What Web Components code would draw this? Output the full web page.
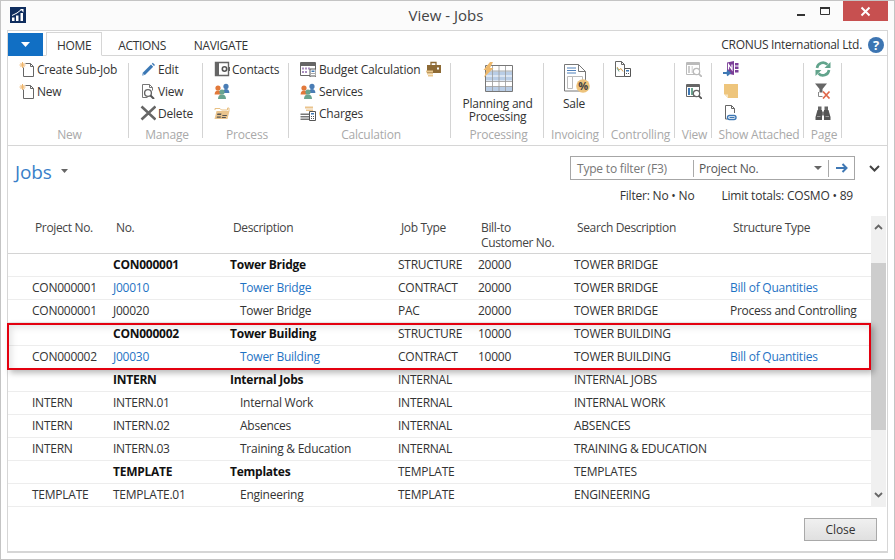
<!DOCTYPE html>
<html>
<head>
<meta charset="utf-8">
<title>View - Jobs</title>
<style>
  html, body { margin: 0; padding: 0; background: #fff; }
  body { font: 12px "Open Sans", "Liberation Sans", sans-serif; color: #333; }
</style>
</head>
<body>
<job-window>
  <title-bar slot="title" heading="View - Jobs"></title-bar>
  <ribbon-tabs slot="tabs" company="CRONUS International Ltd.">
    <ribbon-tab active>HOME</ribbon-tab>
    <ribbon-tab style="margin-left:16px">ACTIONS</ribbon-tab>
    <ribbon-tab style="margin-left:28px">NAVIGATE</ribbon-tab>
  </ribbon-tabs>

  <ribbon-bar slot="ribbon">
    <ribbon-group label="New" width="121">
      <ribbon-col>
        <ribbon-item icon="newdoc">Create Sub-Job</ribbon-item>
        <ribbon-item icon="newdoc">New</ribbon-item>
      </ribbon-col>
    </ribbon-group>
    <ribbon-group label="Manage" width="74">
      <ribbon-col>
        <ribbon-item icon="edit">Edit</ribbon-item>
        <ribbon-item icon="view">View</ribbon-item>
        <ribbon-item icon="delete">Delete</ribbon-item>
      </ribbon-col>
    </ribbon-group>
    <ribbon-group label="Process" width="86">
      <ribbon-col>
        <ribbon-item icon="contacts">Contacts</ribbon-item>
        <ribbon-item icon="people"></ribbon-item>
        <ribbon-item icon="folder"></ribbon-item>
      </ribbon-col>
    </ribbon-group>
    <ribbon-group label="Calculation" width="162">
      <ribbon-col style="width:126px;--item-gap:3px">
        <ribbon-item icon="budget">Budget Calculation</ribbon-item>
        <ribbon-item icon="people">Services</ribbon-item>
        <ribbon-item icon="charges">Charges</ribbon-item>
      </ribbon-col>
      <ribbon-col>
        <ribbon-item icon="briefcase"></ribbon-item>
      </ribbon-col>
    </ribbon-group>
    <ribbon-group label="Processing" width="93">
      <ribbon-large icon="planning">Planning and<br>Processing</ribbon-large>
    </ribbon-group>
    <ribbon-group label="Invoicing" width="60">
      <ribbon-large icon="sale">Sale</ribbon-large>
    </ribbon-group>
    <ribbon-group label="Controlling" width="71">
      <ribbon-col><ribbon-item icon="controlling"></ribbon-item></ribbon-col>
    </ribbon-group>
    <ribbon-group label="View" width="37">
      <ribbon-col>
        <ribbon-item icon="viewgrey"></ribbon-item>
        <ribbon-item icon="viewdark"></ribbon-item>
      </ribbon-col>
    </ribbon-group>
    <ribbon-group label="Show Attached" width="92">
      <ribbon-col>
        <ribbon-item icon="onenote"></ribbon-item>
        <ribbon-item icon="note"></ribbon-item>
        <ribbon-item icon="attach"></ribbon-item>
      </ribbon-col>
    </ribbon-group>
    <ribbon-group label="Page" width="38">
      <ribbon-col>
        <ribbon-item icon="refresh"></ribbon-item>
        <ribbon-item icon="filterx"></ribbon-item>
        <ribbon-item icon="binoculars"></ribbon-item>
      </ribbon-col>
    </ribbon-group>
  </ribbon-bar>

  <page-head slot="head" heading="Jobs"></page-head>

  <job-table slot="table">
    <job-row head data="Project No.|No.|Description|Job Type|Bill-to<br>Customer No.|Search Description|Structure Type"></job-row>
    <job-row bold data="|CON000001|Tower Bridge|STRUCTURE|20000|TOWER BRIDGE|"></job-row>
    <job-row link data="CON000001|J00010|Tower Bridge|CONTRACT|20000|TOWER BRIDGE|Bill of Quantities"></job-row>
    <job-row data="CON000001|J00020|Tower Bridge|PAC|20000|TOWER BRIDGE|Process and Controlling"></job-row>
    <job-row bold data="|CON000002|Tower Building|STRUCTURE|10000|TOWER BUILDING|"></job-row>
    <job-row link data="CON000002|J00030|Tower Building|CONTRACT|10000|TOWER BUILDING|Bill of Quantities"></job-row>
    <job-row bold data="|INTERN|Internal Jobs|INTERNAL||INTERNAL JOBS|"></job-row>
    <job-row data="INTERN|INTERN.01|Internal Work|INTERNAL||INTERNAL WORK|"></job-row>
    <job-row data="INTERN|INTERN.02|Absences|INTERNAL||ABSENCES|"></job-row>
    <job-row data="INTERN|INTERN.03|Training &amp; Education|INTERNAL||TRAINING &amp; EDUCATION|"></job-row>
    <job-row bold data="|TEMPLATE|Templates|TEMPLATE||TEMPLATES|"></job-row>
    <job-row data="TEMPLATE|TEMPLATE.01|Engineering|TEMPLATE||ENGINEERING|"></job-row>
  </job-table>

  <window-foot slot="foot"></window-foot>
</job-window>

<script>
// icon drawings, all on a 16 box unless the entry brings its own svg
const ICONS = {
  newdoc: `<path d="M6.5 2.5h5l3 3v10h-10v-9" fill="#fff" stroke="#666"/><path d="M11.5 2.5v3h3" fill="none" stroke="#666"/>
    <path d="M3.5 1v6M.5 4h6M1.4 1.9l4.2 4.2M5.6 1.9l-4.2 4.2" stroke="#eeb56c" stroke-width="1"/>`,
  edit: `<path d="M3 11.5l8-8 2.2 2.2-8 8-3 .8z" fill="#3b78b5"/><path d="M11.8 2.7l1-1 2.2 2.2-1 1z" fill="#3b78b5"/><path d="M2.2 14.500l.6-2.400 1.800 1.800z" fill="#9dbbd8"/>`,
  view: `<path d="M2.5 1.5h7l3 3v3M2.5 1.5v13h5" fill="none" stroke="#777"/><path d="M9.5 1.5v3h3" fill="none" stroke="#777"/>
    <circle cx="8" cy="10" r="3.4" fill="#fff" stroke="#666" stroke-width="1.4"/><path d="M10.5 12.5l3.5 3.5" stroke="#555" stroke-width="2"/>`,
  delete: `<path d="M1.5 1.500l14 13M15.500 1.500l-14 13" stroke="#666" stroke-width="2.600"/>`,
  contacts: `<path d="M1.5 1.5h13v13h-13z" fill="#fff" stroke="#666" stroke-width="1.4"/><path d="M1 1h4v14H1z" fill="#666"/><circle cx="10.5" cy="8" r="2.2" fill="none" stroke="#555" stroke-width="1.6"/><path d="M14 6h2v4h-2z" fill="#666"/>`,
  people: `<circle cx="12" cy="3.4" r="2.6" fill="#4a7db5"/><path d="M8.6 10c0-2.6 1.4-4 3.4-4s3.4 1.4 3.4 4z" fill="#4a7db5"/>
    <circle cx="4" cy="5" r="2.6" fill="#e2793a"/><path d="M.6 11.5c0-2.6 1.4-4 3.4-4s3.4 1.4 3.4 4z" fill="#e2793a"/>
    <circle cx="8" cy="9" r="2.6" fill="#6aa590"/><path d="M4 16c0-3 1.6-4.400 4-4.400s4 1.400 4 4.400z" fill="#6aa590"/>`,
  folder: `<path d="M1 5V3.500h5l1.500 1.500h6V3h1.500v3" fill="none" stroke="#e8c083"/><path d="M.5 14l2-8h13l-2 8z" fill="#eac48d"/><path d="M3.500 8.500h4l-.5 1.500h-4zM3 11.500h4l-.4 1.200h-4zM8.500 10h4.500l-.3 1h-4.500zM8 12h4l-.3 1H7.700z" fill="#555"/>`,
  budget: `<path d="M.5 1.500h15v13H.5z" fill="#fff" stroke="#666"/><path d="M1 2h14v3H1z" fill="#666"/><path d="M2 6.500h2v2H2zM5 6.500h2v2H5zM8 6.500h2v2H8zM2 10h2v2H2zM5 10h2v2H5z" fill="#a98ec0"/>
    <path d="M10 8h6v8h-6z" fill="#fff" stroke="#555"/><path d="M11.500 9.500h3v1.500h-3z" fill="#3f78b4"/><path d="M11.500 12h1v1h-1zM13.500 12h1v1h-1zM11.500 14h1v1h-1zM13.500 14h1v1h-1z" fill="#555"/>`,
  briefcase: `<path d="M5 4V1.500h5V4" fill="none" stroke="#8d6a35" stroke-width="1.300"/><path d="M1 4h14v8H1z" fill="#8d6a35"/><path d="M11 6.500h2v2h-2z" fill="#fff"/><path d="M0 9.500h7v2H0zM1 12h6v1.600H1zM2 14h5v1.600H2z" fill="#e9c88f"/>`,
  charges: `<path d="M5 1.500h8v2H5zM6 4.500h7v1.500H6z" fill="#eac48d"/><path d="M.500 8.500h9v1.500h-9zM.500 11h9v1.500h-9zM.500 13.500h9V15h-9z" fill="#777"/>
    <path d="M9.500 6.500h6v9h-6z" fill="#fff" stroke="#555"/><path d="M11 8h3v1.500h-3z" fill="#3f78b4"/><path d="M11 11h1v1h-1zM13 11h1v1h-1zM11 13h1v1h-1zM13 13h1v1h-1z" fill="#555"/>`,
  controlling: `<path d="M.5.500h6l3 3v12h-9z" fill="#fff" stroke="#666"/><path d="M6.500.500v3h3" fill="none" stroke="#666"/><path d="M2 6l2 3 2-1.500 2 3" fill="none" stroke="#d6a04e"/><path d="M2 7l2 3.500" stroke="#6aa590" fill="none"/>
    <path d="M9.500 7.500h6v8h-6z" fill="#fff" stroke="#555"/><path d="M11 9h3v1.500h-3z" fill="#3f78b4"/><path d="M11 12h1v1h-1zM13 12h1v1h-1z" fill="#555"/>`,
  viewgrey: `<path d="M.5 1.500h13v12H.5z" fill="#fff" stroke="#bbb"/><path d="M1 2h12v2H1z" fill="#bbb"/><path d="M2 5h2v7H2z" fill="#ccc"/><path d="M5.500 5H7v7H5.500z" fill="#ddd"/>
    <circle cx="10.500" cy="10.500" r="3.200" fill="#fff" stroke="#bbb" stroke-width="1.300"/><path d="M12.800 12.800L16 16" stroke="#bbb" stroke-width="1.800"/>`,
  viewdark: `<path d="M.5 1.500h13v12H.5z" fill="#fff" stroke="#666"/><path d="M1 2h12v2H1z" fill="#666"/><path d="M2 5h2v7H2z" fill="#3f78b4"/><path d="M5 5h2v7H5z" fill="#6aa590"/>
    <circle cx="10.500" cy="10.500" r="3.200" fill="#fff" stroke="#666" stroke-width="1.300"/><path d="M12.800 12.800L16 16" stroke="#555" stroke-width="1.800"/>`,
  onenote: `<path d="M4 1.500L11 0v14l-7-1.500z" fill="#7b3f98"/><path d="M12 2h3.500v2.500H12zM12 5.500h3.500V8H12zM12 9h3.500v2.500H12z" fill="#7b3f98"/><path d="M5.500 8.500v-5l3.500 5v-5" fill="none" stroke="#fff" stroke-width="1.200"/>
    <path d="M0 12h6M4 9.500l2.800 2.500L4 14.500" fill="none" stroke="#3f78b4" stroke-width="1.800"/>`,
  note: `<path d="M1 1h14v14H5l-4-4z" fill="#eec57c"/><path d="M1.500 11.500H5V15z" fill="#f7e6c4"/>`,
  attach: `<path d="M2.500 9V.5h6l3 3V8M2.500 9v5h2" fill="none" stroke="#666"/><path d="M8.500.5v3h3" fill="none" stroke="#666"/>
    <path d="M9 10.500H6.500a2 2 0 0 0 0 4H9M8 14.500h3a2 2 0 0 0 0-4H8" fill="none" stroke="#3f78b4" stroke-width="1.400"/><path d="M6.500 12.500h5" stroke="#3f78b4"/>`,
  refresh: `<path d="M2 7a6 6 0 0 1 10.500-3.300" fill="none" stroke="#62a48c" stroke-width="2.600"/><path d="M9.500 7h6V1z" fill="#62a48c"/>
    <path d="M14 9a6 6 0 0 1-10.500 3.300" fill="none" stroke="#62a48c" stroke-width="2.600"/><path d="M6.500 9h-6v6z" fill="#62a48c"/>`,
  filterx: `<path d="M0 .5h12L7.500 6v3.500H4.500V6z" fill="#666"/><path d="M3.500 9v4.500h4" fill="none" stroke="#888"/><path d="M8 8.500l6.500 7M14.500 8.500l-6.500 7" stroke="#e0684a" stroke-width="1.700"/>`,
  binoculars: `<path d="M3 1.500h3.500V5H3zM9.500 1.500H13V5H9.500z" fill="#666"/><path d="M2.500 5h4.500v10H.5v-3zM9 5h4.500l2 7v3H9z" fill="#555"/><path d="M7 6.500h2v4H7z" fill="#777"/><path d="M2 11.500h3.500M10.500 11.500H14" stroke="#999"/>`,
  planning: `<svg viewBox="0 0 30 30" width="30" height="30"><path d="M2.500 3.500h27v26h-27z" fill="#fff"/><path d="M3 9.500h26v9H3zM3 25h26v4H3z" fill="#b9cde6"/>
    <path d="M2.500 3.500h27v26h-27z" fill="none" stroke="#777"/><path d="M3 14h26" stroke="#fff"/><path d="M3 9h26M3 19.500h26M3 24.500h26" stroke="#888" stroke-width=".7"/><path d="M9.500 4v25M16 4v25M22.500 4v25" stroke="#999" stroke-width=".8"/>
    <path d="M7 0L.5 8h3L1 15.500 10.500 6H7L10 0z" fill="#eeb96c"/></svg>`,
  sale: `<svg viewBox="0 0 32 32" width="32" height="32"><path d="M6.500 2.500h14l7 7v19.500h-21z" fill="#fff" stroke="#777"/><path d="M20.500 2.500v7h7" fill="none" stroke="#777"/><path d="M9 6h9M9 8.500h9M9 11h9" stroke="#4f80ba"/><path d="M9.500 14.500h5v12h-5zM14.500 14.500h10v8" fill="none" stroke="#bbb"/>
    <circle cx="25" cy="24" r="6.800" fill="#edc37c"/><text x="25" y="28" text-anchor="middle" font-size="11" font-weight="700" font-family="Open Sans, sans-serif" fill="#444">%</text></svg>`
};

function iconSvg(name) {
  const body = ICONS[name] || "";
  if (body.startsWith("<svg")) return body;
  return `<svg viewBox="0 0 16 16" width="16" height="16">${body}</svg>`;
}

// Outer frame of the dialog
class JobWindow extends HTMLElement {
  constructor() {
    super();
    this.attachShadow({ mode: "open" });
    this.shadowRoot.innerHTML = `
      <style>
        :host { display: flex; flex-direction: column; box-sizing: border-box; width: 895px; height: 560px;
          border: 1px solid #c4c4c4; background: #fff; overflow: hidden; }
        .frame { flex: 1; display: flex; flex-direction: column; margin: 0 6px 6px 6px; border: 1px solid #d6d6d6; border-bottom-width: 2px; min-height: 0; }
      </style>
      <slot name="title"></slot>
      <div class="frame">
        <slot name="tabs"></slot>
        <slot name="ribbon"></slot>
        <slot name="head"></slot>
        <slot name="table"></slot>
        <slot name="foot"></slot>
      </div>`;
  }
}

class TitleBar extends HTMLElement {
  constructor() {
    super();
    this.attachShadow({ mode: "open" });
  }
  connectedCallback() {
    this.shadowRoot.innerHTML = `
      <style>
        :host { display: flex; align-items: flex-start; height: 29px; background: #fbfbfb; }
        .logo { margin: 6px 0 0 9px; width: 16px; height: 16px; }
        h1 { flex: 1; margin: 0; padding: 4px 0 0 77px; text-align: center; font-size: 15px; font-weight: 400; line-height: 21px; color: #444; }
        .ctl { display: flex; margin-right: 6px; }
        .b { width: 24px; height: 20px; display: flex; align-items: center; justify-content: center; }
        .close { width: 45px; background: #c75050; margin-left: 6px; }
      </style>
      <svg class="logo" viewBox="0 0 16 16"><path d="M0 0h16v16H0z" fill="#0f2d5e"/><path d="M2 10.500h2.500V14H2zM6 8.500h2.500V14H6zM10.500 6H13v8h-2.500z" fill="#fff"/><path d="M2 8.500l5-2.500 4.500-3.500" stroke="#fff" fill="none"/><path d="M10 2h3.500v3.500z" fill="#fff"/></svg>
      <h1>${this.getAttribute("heading")}</h1>
      <div class="ctl">
        <div class="b"><svg width="10" height="10"><path d="M1 8h8v2H1z" fill="#333"/></svg></div>
        <div class="b"><svg width="12" height="10"><path d="M1.500 1.500h9v7h-9z" fill="none" stroke="#333"/><path d="M1 1h10v2H1z" fill="#333"/></svg></div>
        <div class="b close"><svg width="11" height="11"><path d="M1.500 1.500l8 8M9.500 1.500l-8 8" stroke="#fff" stroke-width="2"/></svg></div>
      </div>`;
  }
}

class RibbonTabs extends HTMLElement {
  constructor() {
    super();
    this.attachShadow({ mode: "open" });
  }
  connectedCallback() {
    this.shadowRoot.innerHTML = `
      <style>
        :host { display: flex; align-items: flex-end; height: 24px; border-bottom: 1px solid #d6d6d6; }
        .menu { width: 35px; height: 23px; background: #116fc4; display: flex; align-items: center; justify-content: center; margin-right: 3px; margin-bottom: -1px; }
        .co { margin-left: auto; align-self: center; display: flex; align-items: center; padding-top: 3px; color: #333; white-space: nowrap; }
        .co span { letter-spacing: -.3px; }
        .co svg { margin: 0 3px 0 6px; }
      </style>
      <div class="menu"><svg width="9" height="5"><path d="M0 0h9L4.500 5z" fill="#fff"/></svg></div>
      <slot></slot>
      <div class="co"><span>${this.getAttribute("company")}</span>
        <svg width="16" height="16" viewBox="0 0 16 16"><circle cx="8" cy="8" r="8" fill="#3d75b2"/><text x="8" y="12.500" text-anchor="middle" font-size="13" font-weight="700" font-family="Open Sans, sans-serif" fill="#fff">?</text></svg>
      </div>`;
  }
}

class RibbonTab extends HTMLElement {
  constructor() {
    super();
    this.attachShadow({ mode: "open" });
    this.shadowRoot.innerHTML = `
      <style>
        :host { display: block; height: 22px; line-height: 25px; color: #333; white-space: nowrap; letter-spacing: -.35px; }
        :host([active]) { padding: 0 10px; border: 1px solid #d6d6d6; border-bottom: 1px solid #fff; margin-bottom: -1px; background: #fff; }
      </style>
      <slot></slot>`;
  }
}

class RibbonBar extends HTMLElement {
  constructor() {
    super();
    this.attachShadow({ mode: "open" });
    this.shadowRoot.innerHTML = `
      <style>:host { display: flex; height: 89px; border-bottom: 1px solid #d6d6d6; }</style>
      <slot></slot>`;
  }
}

class RibbonGroup extends HTMLElement {
  constructor() {
    super();
    this.attachShadow({ mode: "open" });
  }
  connectedCallback() {
    this.shadowRoot.innerHTML = `
      <style>
        :host { display: flex; flex-direction: column; box-sizing: border-box; height: 89px; width: ${this.getAttribute("width")}px;
          padding-top: 2px; background: linear-gradient(#d4d4d4, #d4d4d4) right 7px / 1px 75px no-repeat; }
        .body { flex: 1; display: flex; padding-left: 11px; min-height: 0; }
        .label { height: 16px; line-height: 16px; margin-bottom: 2px; padding-left: 2px; text-align: center; color: #a9a9a9; white-space: nowrap; letter-spacing: -.2px; }
      </style>
      <div class="body"><slot></slot></div>
      <div class="label">${this.getAttribute("label")}</div>`;
  }
}

class RibbonCol extends HTMLElement {
  constructor() {
    super();
    this.attachShadow({ mode: "open" });
    this.shadowRoot.innerHTML = `
      <style>:host { display: flex; flex-direction: column; }</style>
      <slot></slot>`;
  }
}

class RibbonItem extends HTMLElement {
  constructor() {
    super();
    this.attachShadow({ mode: "open" });
  }
  connectedCallback() {
    this.shadowRoot.innerHTML = `
      <style>
        :host { display: flex; align-items: center; gap: var(--item-gap, 2px); height: 22px; color: #333; white-space: nowrap; letter-spacing: -.2px; }
        svg { flex: none; display: block; }
      </style>
      ${iconSvg(this.getAttribute("icon"))}
      <slot></slot>`;
  }
}

class RibbonLarge extends HTMLElement {
  constructor() {
    super();
    this.attachShadow({ mode: "open" });
  }
  connectedCallback() {
    this.shadowRoot.innerHTML = `
      <style>
        :host { display: flex; flex-direction: column; align-items: center; flex: 1; margin-left: -11px; padding-top: 4px; line-height: 13px; text-align: center; color: #333; letter-spacing: -.25px; }
        .pic { height: 35px; flex: none; }
        svg { display: block; }
      </style>
      <div class="pic">${iconSvg(this.getAttribute("icon"))}</div>
      <div><slot></slot></div>`;
  }
}

class PageHead extends HTMLElement {
  constructor() {
    super();
    this.attachShadow({ mode: "open" });
  }
  connectedCallback() {
    this.shadowRoot.innerHTML = `
      <style>
        :host { display: block; height: 70px; letter-spacing: -.2px; }
        .top { display: flex; align-items: flex-start; height: 42px; padding-top: 10px; box-sizing: border-box; }
        h2 { margin: 3px 0 0 7px; font-size: 19px; line-height: 26px; font-weight: 400; color: #3a7fc9; letter-spacing: -.1px; }
        .caret { margin: 13px 0 0 9px; }
        .filter { margin-left: auto; display: flex; align-items: center; box-sizing: border-box; width: 285px; height: 24px; border: 1px solid #a6a6a6; }
        .ph { width: 122px; padding-left: 6px; box-sizing: border-box; color: #777; }
        .sep { width: 1px; height: 17px; background: #aaa; }
        .field { flex: 1; padding-left: 5px; color: #555; }
        .arrow { width: 25px; display: flex; justify-content: center; }
        .drop { margin-right: 6px; }
        .chev { margin: 9px 7px 0 14px; }
        .info { display: flex; justify-content: flex-end; padding-right: 34px; gap: 27px; line-height: 16px; color: #333; }
      </style>
      <div class="top">
        <h2>${this.getAttribute("heading")}</h2>
        <svg class="caret" width="7" height="4"><path d="M0 0h7L3.500 4z" fill="#666"/></svg>
        <div class="filter">
          <div class="ph">Type to filter (F3)</div>
          <div class="sep"></div>
          <div class="field">Project No.</div>
          <svg class="drop" width="8" height="4"><path d="M0 0h8L4 4z" fill="#666"/></svg>
          <div class="sep"></div>
          <div class="arrow"><svg width="12" height="10"><path d="M0 5h10M6.500 1l4 4-4 4" fill="none" stroke="#3f78b4" stroke-width="2"/></svg></div>
        </div>
        <svg class="chev" width="11" height="7"><path d="M1 1l4.500 4.500L10 1" fill="none" stroke="#444" stroke-width="2"/></svg>
      </div>
      <div class="info"><span>Filter: No • No</span><span>Limit totals: COSMO • 89</span></div>`;
  }
}

class JobTable extends HTMLElement {
  constructor() {
    super();
    this.attachShadow({ mode: "open" });
    this.shadowRoot.innerHTML = `
      <style>
        :host { display: flex; height: 291px; position: relative; }
        .rows { flex: none; width: 863px; overflow: hidden; }
        .bar { flex: none; width: 15px; background: #f0f0f0; display: flex; flex-direction: column; align-items: center; }
        .thumb { width: 15px; height: 167px; background: #cdcdcd; margin-top: 47px; }
        .up { height: 0; }
        .up svg { display: block; margin-top: 8px; }
        .down { margin-top: auto; height: 15px; }
        .mark { position: absolute; left: -1px; top: 107px; width: 864px; height: 47px; box-sizing: border-box;
          border: 2px solid #e3000f; box-shadow: 3px 3px 6px rgba(0,0,0,.28), inset 3px 3px 6px rgba(0,0,0,.1); pointer-events: none; }
      </style>
      <div class="rows"><slot></slot></div>
      <div class="bar">
        <div class="up"><svg width="9" height="6"><path d="M1 5l3.500-3.500L8 5" fill="none" stroke="#666" stroke-width="1.800"/></svg></div>
        <div class="thumb"></div>
        <div class="down"><svg width="9" height="6" style="display:block"><path d="M1 1l3.500 3.500L8 1" fill="none" stroke="#666" stroke-width="1.800"/></svg></div>
      </div>
      <div class="mark"></div>`;
  }
}

class JobRow extends HTMLElement {
  constructor() {
    super();
    this.attachShadow({ mode: "open" });
  }
  connectedCallback() {
    const cells = this.getAttribute("data").split("|");
    const link = this.hasAttribute("link");
    const head = this.hasAttribute("head");
    const html = cells.map((text, i) => {
      let cls = "";
      if (!head && i === 2 && !this.hasAttribute("bold")) cls += " indent";
      if (link && (i === 1 || i === 2 || i === 6)) cls += " link";
      return `<div class="${cls}">${text}</div>`;
    }).join("");
    this.shadowRoot.innerHTML = `
      <style>
        :host { display: grid; box-sizing: border-box; grid-template-columns: 81px 117px 168px 80px 96px 156px 1fr;
          height: 23px; line-height: 22px; padding-left: 24px; border-bottom: 1px solid #ededed; white-space: nowrap; color: #333; letter-spacing: -.25px; }
        :host([bold]) { font-weight: 700; color: #111; }
        :host([head]) { height: 38px; line-height: 15px; padding-top: 4px; border-bottom: 1px solid #d4d4d4; letter-spacing: -.35px; }
        :host([head]) div { padding-left: 3px; color: #444; }
        .indent { padding-left: 10px; }
        .link { color: #1f73c4; }
        /* only the no. and description of a bold row are heavy */
        :host([bold]) div:nth-of-type(n+4) { font-weight: 400; color: #333; }
      </style>
      ${html}`;
  }
}

class WindowFoot extends HTMLElement {
  constructor() {
    super();
    this.attachShadow({ mode: "open" });
    this.shadowRoot.innerHTML = `
      <style>
        :host { display: flex; justify-content: flex-end; padding: 11px 10px 0 0; }
        button { width: 73px; height: 23px; padding: 0; border: 1px solid #a9a9a9; background: linear-gradient(#f0f0f0, #e0e0e0); font: inherit; color: #333; letter-spacing: -.1px; }
      </style>
      <button>Close</button>`;
  }
}

customElements.define("job-window", JobWindow);
customElements.define("title-bar", TitleBar);
customElements.define("ribbon-tabs", RibbonTabs);
customElements.define("ribbon-tab", RibbonTab);
customElements.define("ribbon-bar", RibbonBar);
customElements.define("ribbon-group", RibbonGroup);
customElements.define("ribbon-col", RibbonCol);
customElements.define("ribbon-item", RibbonItem);
customElements.define("ribbon-large", RibbonLarge);
customElements.define("page-head", PageHead);
customElements.define("job-table", JobTable);
customElements.define("job-row", JobRow);
customElements.define("window-foot", WindowFoot);
</script>
</body>
</html>
